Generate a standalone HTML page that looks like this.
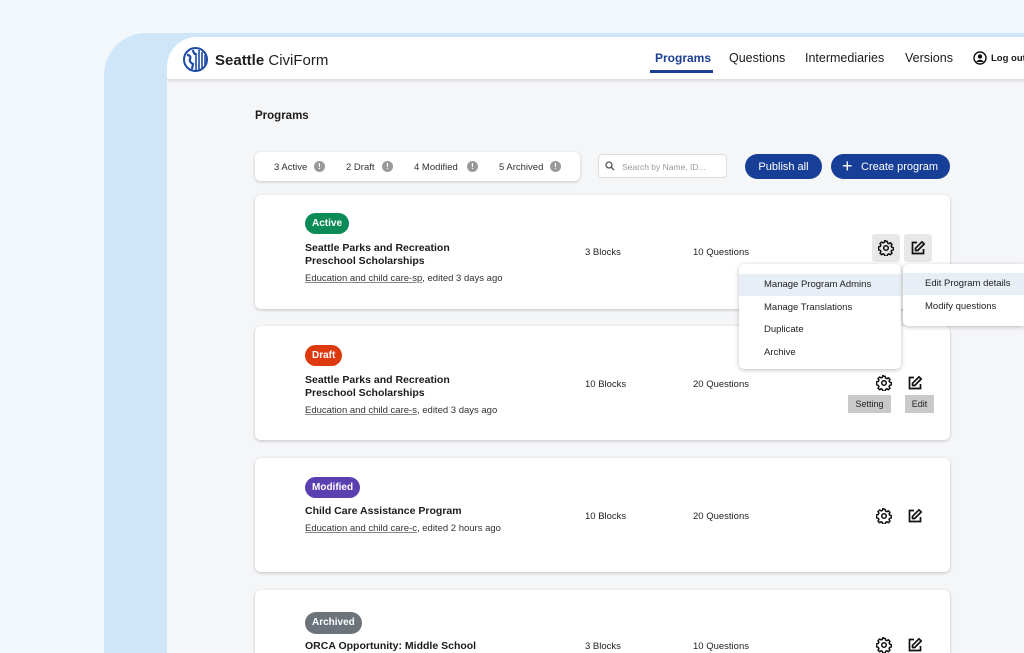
<!DOCTYPE html>
<html><head><meta charset="utf-8"><style>
*{margin:0;padding:0;box-sizing:border-box}
html,body{width:1024px;height:653px;overflow:hidden}
body{background:#f2f7fb;font-family:"Liberation Sans",sans-serif;color:#1b1b1b;position:relative}
.a{position:absolute;white-space:nowrap}
.blue{left:104px;top:33px;width:920px;height:620px;background:#cfe6f9;border-radius:42px 0 0 0}
.frame{left:167px;top:37px;width:857px;height:616px;background:#f5f6f8;border-radius:30px 0 0 0;overflow:hidden}
.hdr{left:0;top:0;width:857px;height:43px;background:#fff;border-bottom:1px solid #ddd;box-shadow:0 1px 3px rgba(0,0,0,.12)}
.nav{font-size:12.5px;color:#1b1b1b}
.card{left:255px;width:695px;background:#fff;border-radius:6px;box-shadow:0 1px 3px rgba(0,0,0,.22)}
.badge{left:305px;height:21px;border-radius:11px;color:#fff;font-size:10px;font-weight:bold;line-height:21px;padding:0 7px}
.t{left:305px;font-size:10.5px;font-weight:bold;line-height:13px}
.s{left:305px;font-size:9.5px;color:#333}
.s u{text-decoration:underline;text-decoration-color:#888}
.n{font-size:9.5px;color:#222}
.mi{font-size:9.5px;color:#222;left:0;width:100%;padding-left:25px;height:22px;line-height:22px}
.tip{background:#c9c9c9;font-size:9px;height:18px;line-height:18px;text-align:center;color:#222}
.fl{font-size:9.5px;color:#333;top:162px}
.dot{top:161px;width:11px;height:11px;border-radius:50%;background:#999;color:#fff;font-size:8px;font-weight:bold;text-align:center;line-height:11px}
</style></head><body>
<div class="a blue"></div>
<div class="a frame"><div class="a hdr"></div></div>

<svg class="a" style="left:183px;top:47px" width="25" height="25" viewBox="0 0 25 25">
<circle cx="12.5" cy="12.5" r="11.5" fill="none" stroke="#1c4aa6" stroke-width="2"/>
<path d="M4 8c3 0 4 2 3 4s1 4 3 5l-1 5M10 3c0 3 2 3 2 5" stroke="#1c4aa6" stroke-width="2.2" fill="none"/>
<path d="M13 6v17M16 3v20M19 5v16M22 8v10" stroke="#1c4aa6" stroke-width="1.6"/>
</svg>
<div class="a" style="left:215px;top:52px;font-size:15px;color:#222"><b>Seattle</b> CiviForm</div>

<div class="a nav" style="left:655px;top:51px;color:#1c3f94;font-weight:bold;font-size:12px">Programs</div>
<div class="a" style="left:650px;top:70px;width:63px;height:3px;background:#1c3f94"></div>
<div class="a nav" style="left:729px;top:51px">Questions</div>
<div class="a nav" style="left:805px;top:51px">Intermediaries</div>
<div class="a nav" style="left:905px;top:51px">Versions</div>
<svg class="a" style="left:973px;top:51px" width="14" height="14" viewBox="0 0 14 14"><circle cx="7" cy="7" r="6" fill="none" stroke="#111" stroke-width="1.4"/><circle cx="7" cy="5.5" r="2.2" fill="#111"/><path d="M3 11c2-3 6-3 8 0" fill="#111"/></svg>
<div class="a" style="left:991px;top:53px;font-size:9.5px;font-weight:bold">Log out</div>

<div class="a" style="left:255px;top:110px;font-size:11.5px;font-weight:bold">Programs</div>

<div class="a" style="left:255px;top:152px;width:325px;height:29px;background:#fff;border-radius:6px;box-shadow:0 1px 3px rgba(0,0,0,.2)"></div>
<div class="a fl" style="left:274px">3 Active</div>
<div class="a fl" style="left:346px">2 Draft</div>
<div class="a fl" style="left:414px">4 Modified</div>
<div class="a fl" style="left:499px">5 Archived</div>
<div class="a dot" style="left:314px">!</div>
<div class="a dot" style="left:382px">!</div>
<div class="a dot" style="left:467px">!</div>
<div class="a dot" style="left:550px">!</div>

<div class="a" style="left:598px;top:154px;width:129px;height:24px;background:#fff;border:1px solid #ddd;border-radius:4px"></div>
<svg class="a" style="left:605px;top:161px" width="10" height="10" viewBox="0 0 10 10"><circle cx="4" cy="4" r="3" fill="none" stroke="#555" stroke-width="1.3"/><path d="M6.3 6.3L9 9" stroke="#555" stroke-width="1.4"/></svg>
<div class="a" style="left:622px;top:162px;font-size:8.5px;color:#999">Search by Name, ID...</div>

<div class="a" style="left:745px;top:154px;width:77px;height:25px;border-radius:13px;background:#183f98;color:#fff;font-size:11px;line-height:26px;text-align:center">Publish all</div>
<div class="a" style="left:831px;top:154px;width:119px;height:25px;border-radius:13px;background:#183f98;color:#fff;font-size:11px;line-height:26px;padding-left:30px">Create program</div>
<div class="a" style="left:842px;top:158px;color:#fff;font-size:18px;line-height:16px">+</div>

<div class="a card" style="top:195px;height:114px"></div>
<div class="a badge" style="top:213px;background:#0b8b56">Active</div>
<div class="a t" style="top:242px">Seattle Parks and Recreation<br>Preschool Scholarships</div>
<div class="a s" style="top:273px"><u>Education and child care-sp</u>, edited 3 days ago</div>
<div class="a n" style="left:585px;top:247px">3 Blocks</div>
<div class="a n" style="left:693px;top:247px">10 Questions</div>
<div class="a" style="left:872px;top:234px;width:28px;height:28px;background:#e8e8e8;border-radius:3px"></div>
<div class="a" style="left:904px;top:234px;width:28px;height:28px;background:#e8e8e8;border-radius:3px"></div>

<div class="a card" style="top:326px;height:114px"></div>
<div class="a badge" style="top:345px;background:#de3a10">Draft</div>
<div class="a t" style="top:374px">Seattle Parks and Recreation<br>Preschool Scholarships</div>
<div class="a s" style="top:405px"><u>Education and child care-s</u>, edited 3 days ago</div>
<div class="a n" style="left:585px;top:379px">10 Blocks</div>
<div class="a n" style="left:693px;top:379px">20 Questions</div>
<div class="a tip" style="left:848px;top:395px;width:43px">Setting</div>
<div class="a tip" style="left:905px;top:395px;width:29px">Edit</div>

<div class="a card" style="top:458px;height:114px"></div>
<div class="a badge" style="top:477px;background:#5a3fb0">Modified</div>
<div class="a t" style="top:505px">Child Care Assistance Program</div>
<div class="a s" style="top:523px"><u>Education and child care-c</u>, edited 2 hours ago</div>
<div class="a n" style="left:585px;top:511px">10 Blocks</div>
<div class="a n" style="left:693px;top:511px">20 Questions</div>

<div class="a card" style="top:590px;height:63px;border-radius:6px 6px 0 0"></div>
<div class="a badge" style="top:612px;height:22px;line-height:22px;background:#6c737b">Archived</div>
<div class="a t" style="top:640px">ORCA Opportunity: Middle School</div>
<div class="a n" style="left:585px;top:641px">3 Blocks</div>
<div class="a n" style="left:693px;top:641px">10 Questions</div>

<svg width="0" height="0" style="position:absolute"><defs>
<g id="gear"><path d="M8 1.2l1.2.2.4 1.7 1.3.6 1.5-.9 1.6 1.6-.9 1.5.6 1.3 1.7.4v2.3l-1.7.4-.6 1.3.9 1.5-1.6 1.6-1.5-.9-1.3.6-.4 1.7H6.8l-.4-1.7-1.3-.6-1.5.9-1.6-1.6.9-1.5-.6-1.3-1.7-.4V6.8l1.7-.4.6-1.3-.9-1.5 1.6-1.6 1.5.9 1.3-.6.4-1.7z" fill="none" stroke="#111" stroke-width="1.5" stroke-linejoin="round"/><circle cx="8" cy="8" r="2.3" fill="none" stroke="#111" stroke-width="1.5"/></g>
<g id="edit"><path d="M7 2.5H2.5v11h11V9" fill="none" stroke="#111" stroke-width="1.7"/><path d="M12 1.8l2.2 2.2-6.5 6.5H5.5V8.3z" fill="none" stroke="#111" stroke-width="1.7" stroke-linejoin="round"/></g>
</defs></svg>
<svg class="a" style="left:878px;top:240px" width="16" height="16"><use href="#gear"/></svg>
<svg class="a" style="left:910px;top:240px" width="16" height="16"><use href="#edit"/></svg>
<svg class="a" style="left:876px;top:375px" width="16" height="16"><use href="#gear"/></svg>
<svg class="a" style="left:907px;top:375px" width="16" height="16"><use href="#edit"/></svg>
<svg class="a" style="left:876px;top:508px" width="16" height="16"><use href="#gear"/></svg>
<svg class="a" style="left:907px;top:508px" width="16" height="16"><use href="#edit"/></svg>
<svg class="a" style="left:876px;top:637px" width="16" height="16"><use href="#gear"/></svg>
<svg class="a" style="left:907px;top:637px" width="16" height="16"><use href="#edit"/></svg>

<div class="a" style="left:739px;top:264px;width:162px;height:105px;background:#fff;border-radius:5px;box-shadow:0 1px 5px rgba(0,0,0,.25)">
<div class="a mi" style="top:10px;background:#e8eef6">Manage Program Admins</div>
<div class="a mi" style="top:33px">Manage Translations</div>
<div class="a mi" style="top:55px">Duplicate</div>
<div class="a mi" style="top:78px">Archive</div>
</div>
<div class="a" style="left:903px;top:264px;width:121px;height:62px;background:#fff;border-radius:5px 0 0 5px;box-shadow:0 1px 5px rgba(0,0,0,.25)">
<div class="a mi" style="top:9px;background:#e8eef6;padding-left:22px">Edit Program details</div>
<div class="a mi" style="top:32px;padding-left:22px">Modify questions</div>
</div>
</body></html>
